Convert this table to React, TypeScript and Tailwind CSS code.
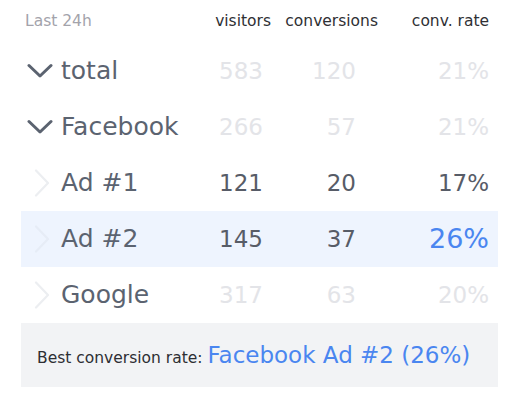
import React from "react";

type Row = {
  label: string;
  visitors: number;
  conversions: number;
  rate: string;
  open?: boolean;
  child?: boolean;
  faded?: boolean;
  best?: boolean;
};

const rows: Row[] = [
  { label: "total", visitors: 583, conversions: 120, rate: "21%", open: true, faded: true },
  { label: "Facebook", visitors: 266, conversions: 57, rate: "21%", open: true, faded: true },
  { label: "Ad #1", visitors: 121, conversions: 20, rate: "17%", child: true },
  { label: "Ad #2", visitors: 145, conversions: 37, rate: "26%", child: true, best: true },
  { label: "Google", visitors: 317, conversions: 63, rate: "20%", child: true, faded: true },
];

function ChevronDown() {
  return (
    <svg width="26" height="16" viewBox="0 0 26 16" fill="none">
      <path d="M2 2.5L13 13L24 2.5" stroke="#5b6370" strokeWidth="3" strokeLinecap="round" strokeLinejoin="round" />
    </svg>
  );
}

function ChevronRight({ light }: { light?: boolean }) {
  return (
    <svg width="16" height="28" viewBox="0 0 16 28" fill="none">
      <path d="M2 1.5L14 14L2 26.5" stroke={light ? "#e6ecf6" : "#eceef1"} strokeWidth="2.2" strokeLinecap="round" strokeLinejoin="round" />
    </svg>
  );
}

export default function App() {
  return (
    <div className="h-[405px] w-[520px] bg-white font-['DejaVu_Sans',sans-serif]">
      <div className="ml-[21px] w-[477px]">
        {/* header */}
        <div className="flex h-[43px] items-center pr-[9px] text-[15.5px]">
          <p className="ml-[4px] flex-1 text-[#a3a3ab]">Last 24h</p>
          <p className="text-[#2f3034]">visitors</p>
          <p className="w-[107px] text-right text-[#2f3034]">conversions</p>
          <p className="w-[111px] text-right text-[#2f3034]">conv. rate</p>
        </div>

        {/* rows */}
        {rows.map((r) => {
          const num = r.faded ? "text-[#e3e4e8]" : "text-[#575c67]";
          return (
            <div
              key={r.label}
              className={`flex h-[56px] items-center pr-[9px] text-[23px] ${r.best ? "bg-[#eef4fe]" : ""}`}
            >
              <div className={`flex w-[40px] items-center ${r.child ? "pl-[13px]" : "pl-[6px]"}`}>
                {r.child ? <ChevronRight light={r.best} /> : <ChevronDown />}
              </div>
              <p className="flex-1 text-[25px] text-[#5b6370]">{r.label}</p>
              <p className={`w-[80px] text-right ${num}`}>{r.visitors}</p>
              <p className={`w-[93px] text-right ${num}`}>{r.conversions}</p>
              <p
                className={`w-[133px] text-right ${
                  r.best ? "text-[27px] text-[#4a86f0]" : num
                }`}
              >
                {r.rate}
              </p>
            </div>
          );
        })}

        {/* footer */}
        <div className="flex h-[64px] items-center bg-[#f2f3f5] pl-[16px]">
          <p className="text-[#2d2e33]">
            <span className="text-[15.5px]">Best conversion rate: </span>
            <span className="text-[23px] text-[#4a86f0]">Facebook Ad #2 (26%)</span>
          </p>
        </div>
      </div>
    </div>
  );
}
